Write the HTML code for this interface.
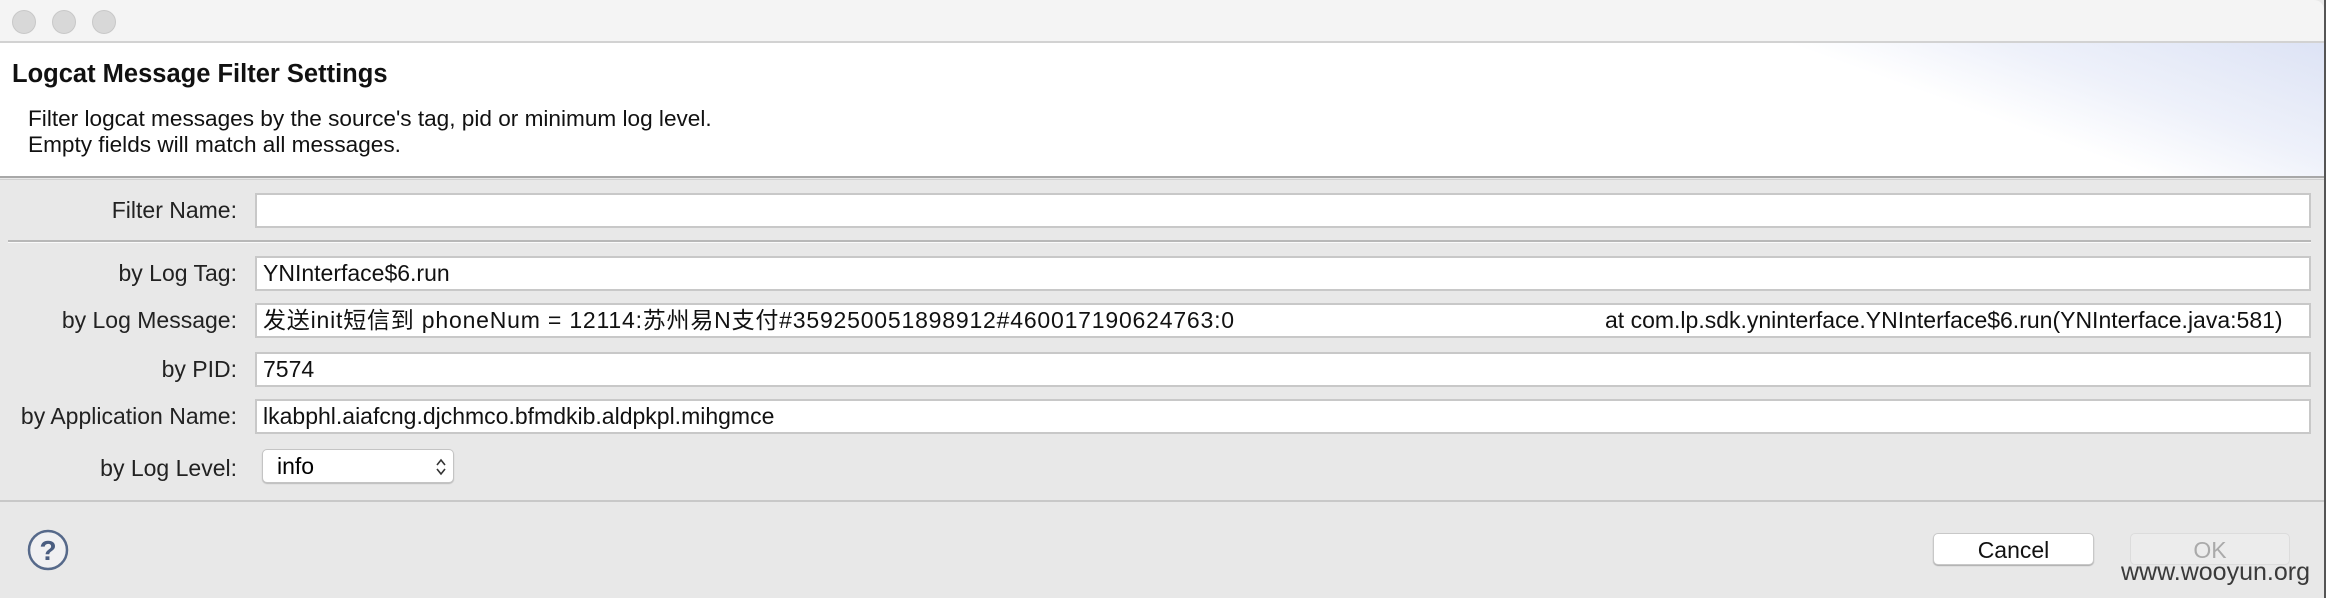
<!DOCTYPE html>
<html><head><meta charset="utf-8"><style>
*{margin:0;padding:0;box-sizing:border-box}
body{width:2326px;height:598px;overflow:hidden;background:#e8e8e8;font-family:"Liberation Sans","Noto Sans CJK SC",sans-serif;position:relative}
.abs{position:absolute}
.tb{left:0;top:0;width:2324px;height:43px;background:#f4f4f4;border-bottom:2px solid #d2d2d2;border-top-right-radius:10px}
.dot{width:24px;height:24px;border-radius:50%;background:#d8d8d8;border:1px solid #c8c8c8;top:10px}
.hdr{left:0;top:43px;width:2324px;height:133px;background:linear-gradient(200deg,#dde3f5 0%,#eef1fa 12%,#fff 20%)}
.sep{left:0;top:176px;width:2324px;height:2px;background:#a8a8a8}
.sep2{left:0;top:179px;width:2324px;height:1px;background:#cfcfcf}
.lbl{font-size:23px;color:#222;text-align:right;width:237px;left:0;height:35px;line-height:35px}
.in{left:255px;width:2056px;height:35px;background:#fff;border:2px solid #c8c8c8;font-size:23px;color:#111;padding-left:6px;line-height:31px;white-space:nowrap}
.btn{height:32px;border-radius:5px;font-size:23px;text-align:center;line-height:32px}
</style></head><body>
<div class="abs tb"></div>
<div class="abs dot" style="left:12px"></div>
<div class="abs dot" style="left:52px"></div>
<div class="abs dot" style="left:92px"></div>
<div class="abs hdr"></div>
<div class="abs" style="left:12px;top:62px;font-size:25.5px;line-height:1;font-weight:bold;color:#111">Logcat Message Filter Settings</div>
<div class="abs" style="left:28px;top:106px;font-size:22.6px;color:#111;line-height:26px">Filter logcat messages by the source's tag, pid or minimum log level.<br>Empty fields will match all messages.</div>
<div class="abs sep"></div><div class="abs sep2"></div>
<div class="abs" style="left:2324px;top:0;width:2px;height:598px;background:#555"></div>

<div class="abs lbl" style="top:193px">Filter Name:</div>
<div class="abs in" style="top:193px"></div>
<div class="abs" style="left:8px;top:240px;width:2303px;height:2px;background:#b8b8b8"></div>
<div class="abs" style="left:8px;top:242px;width:2303px;height:1px;background:#fafafa"></div>

<div class="abs lbl" style="top:256px">by Log Tag:</div>
<div class="abs in" style="top:256px">YNInterface$6.run</div>
<div class="abs lbl" style="top:303px">by Log Message:</div>
<div class="abs in" style="top:303px"><span style="letter-spacing:0.8px">发送init短信到 phoneNum = 12114:苏州易N支付#359250051898912#460017190624763:0</span><span style="position:absolute;left:1348px">at com.lp.sdk.yninterface.YNInterface$6.run(YNInterface.java:581)</span></div>
<div class="abs lbl" style="top:352px">by PID:</div>
<div class="abs in" style="top:352px">7574</div>
<div class="abs lbl" style="top:399px">by Application Name:</div>
<div class="abs in" style="top:399px">lkabphl.aiafcng.djchmco.bfmdkib.aldpkpl.mihgmce</div>
<div class="abs lbl" style="top:451px">by Log Level:</div>
<div class="abs" style="left:262px;top:449px;width:192px;height:34px;background:#fff;border:1px solid #c4c4c4;border-radius:5px;box-shadow:0 1px 1px #bbb;font-size:23px;line-height:32px;padding-left:14px">info
<svg class="abs" style="left:172px;top:8px" width="12" height="18" viewBox="0 0 12 18"><path d="M2 7 L6 2 L10 7 M2 11 L6 16 L10 11" fill="none" stroke="#333" stroke-width="1.6"/></svg></div>

<div class="abs" style="left:0;top:500px;width:2324px;height:2px;background:#c8c8c8"></div>
<svg class="abs" style="left:27px;top:529px" width="42" height="42" viewBox="0 0 42 42"><circle cx="21" cy="21" r="19" fill="#f0f0f2" stroke="#56698a" stroke-width="2.5"/><text x="21" y="31" text-anchor="middle" font-family="Liberation Sans" font-weight="bold" font-size="28" fill="#4a5d80">?</text></svg>

<div class="abs btn" style="left:1933px;top:533px;width:161px;background:#fff;border:1px solid #c8c8c8;box-shadow:0 1px 1px #aaa;color:#111">Cancel</div>
<div class="abs btn" style="left:2130px;top:533px;width:160px;background:#ececec;border:1px solid #dcdcdc;color:#aaa">OK</div>
<div class="abs" style="left:2121px;top:558px;font-size:25px;color:#3a3a3a">www.wooyun.org</div>
</body></html>
